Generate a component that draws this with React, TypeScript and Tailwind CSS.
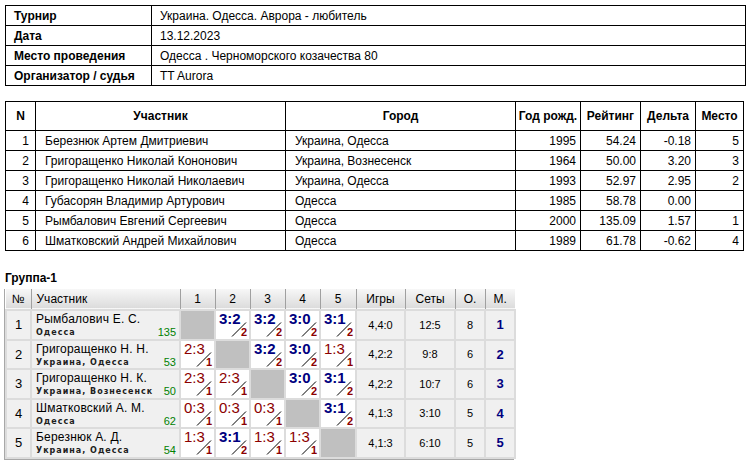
import React from "react";

const info = [
  ["Турнир", "Украина. Одесса. Аврора - любитель"],
  ["Дата", "13.12.2023"],
  ["Место проведения", "Одесса . Черноморского козачества 80"],
  ["Организатор / судья", "TT Aurora"],
];

const players = [
  ["1", "Березнюк Артем Дмитриевич", "Украина, Одесса", "1995", "54.24", "-0.18", "5"],
  ["2", "Григоращенко Николай Кононович", "Украина, Вознесенск", "1964", "50.00", "3.20", "3"],
  ["3", "Григоращенко Николай Николаевич", "Украина, Одесса", "1993", "52.97", "2.95", "2"],
  ["4", "Губасорян Владимир Артурович", "Одесса", "1985", "58.78", "0.00", ""],
  ["5", "Рымбалович Евгений Сергеевич", "Одесса", "2000", "135.09", "1.57", "1"],
  ["6", "Шматковский Андрей Михайлович", "Одесса", "1989", "61.78", "-0.62", "4"],
];

type Row = {
  n: string;
  name: string;
  city: string;
  rating: string;
  scores: (string | null)[];
  games: string;
  sets: string;
  pts: string;
  place: string;
};

const group: Row[] = [
  { n: "1", name: "Рымбалович Е. С.", city: "Одесса", rating: "135", scores: [null, "3:2", "3:2", "3:0", "3:1"], games: "4,4:0", sets: "12:5", pts: "8", place: "1" },
  { n: "2", name: "Григоращенко Н. Н.", city: "Украина, Одесса", rating: "53", scores: ["2:3", null, "3:2", "3:0", "1:3"], games: "4,2:2", sets: "9:8", pts: "6", place: "2" },
  { n: "3", name: "Григоращенко Н. К.", city: "Украина, Вознесенск", rating: "50", scores: ["2:3", "2:3", null, "3:0", "3:1"], games: "4,2:2", sets: "10:7", pts: "6", place: "3" },
  { n: "4", name: "Шматковский А. М.", city: "Одесса", rating: "62", scores: ["0:3", "0:3", "0:3", null, "3:1"], games: "4,1:3", sets: "3:10", pts: "5", place: "4" },
  { n: "5", name: "Березнюк А. Д.", city: "Украина, Одесса", rating: "54", scores: ["1:3", "3:1", "1:3", "1:3", null], games: "4,1:3", sets: "6:10", pts: "5", place: "5" },
];

function ScoreCell({ s }: { s: string | null }) {
  if (s === null) {
    return <td className="bg-[#c0c0c0] border-2 border-[#dcdcdc] p-0" />;
  }
  const [a, b] = s.split(":").map(Number);
  const win = a > b;
  return (
    <td className="bg-white border-2 border-[#dcdcdc] p-0 align-top">
      <div className="relative h-[27px]">
        <span
          className={
            win
              ? "absolute left-[3px] top-[0px] text-[15px] leading-[16px] font-bold text-[#000080]"
              : "absolute left-[3px] top-[0px] text-[15px] leading-[16px] text-[#8b0000]"
          }
        >
          {s}
        </span>
        <svg className="absolute left-0 top-0" width="34" height="27" viewBox="0 0 34 27">
          <line x1="16" y1="25.5" x2="30" y2="11.5" stroke="#000" strokeWidth="1" />
        </svg>
        <span className="absolute right-[2px] bottom-[0px] text-[11px] leading-[11px] font-bold text-[#8b0000]">
          {win ? "2" : "1"}
        </span>
      </div>
    </td>
  );
}

export default function App() {
  return (
    <div className="w-[750px] h-[464px] bg-white text-black overflow-hidden" style={{ fontFamily: '"Liberation Sans", Arial, sans-serif' }}>
      <div className="pt-[5px] pl-[5px]">
        <table className="border-collapse w-[741px] text-[12px]">
          <tbody>
            {info.map(([k, v]) => (
              <tr key={k} className="h-[20px]">
                <td className="border border-black w-[146px] pl-[8px] font-bold leading-[14px] py-0">{k}</td>
                <td className="border border-black pl-[8px] leading-[14px] py-0">{v}</td>
              </tr>
            ))}
          </tbody>
        </table>

        <table className="border-collapse w-[739px] text-[12px] mt-[15px]">
          <thead>
            <tr className="h-[29px] font-bold">
              <th className="border border-black w-[30px] text-center">N</th>
              <th className="border border-black w-[250px] text-center">Участник</th>
              <th className="border border-black w-[230px] text-center">Город</th>
              <th className="border border-black w-[65px] text-center">Год рожд.</th>
              <th className="border border-black w-[60px] text-center">Рейтинг</th>
              <th className="border border-black w-[55px] text-center">Дельта</th>
              <th className="border border-black text-center">Место</th>
            </tr>
          </thead>
          <tbody>
            {players.map((p) => (
              <tr key={p[0]} className="h-[20px] leading-[14px]">
                <td className="border border-black text-right pr-[6px] py-0">{p[0]}</td>
                <td className="border border-black pl-[9px] py-0">{p[1]}</td>
                <td className="border border-black pl-[9px] py-0">{p[2]}</td>
                <td className="border border-black text-right pr-[4px] py-0">{p[3]}</td>
                <td className="border border-black text-right pr-[4px] py-0">{p[4]}</td>
                <td className="border border-black text-right pr-[4px] py-0">{p[5]}</td>
                <td className="border border-black text-right pr-[4px] py-0">{p[6]}</td>
              </tr>
            ))}
          </tbody>
        </table>
      </div>

      <div className="pl-[5px] mt-[20px] text-[12px] font-bold leading-[14px]">Группа-1</div>

      <div className="ml-[4px] mt-[4px] w-[510px] border-x border-b border-[#a8a8a8]">
        <table className="border-collapse w-full text-[12px] table-fixed">
          <colgroup>
            <col className="w-[25px]" />
            <col className="w-[149px]" />
            <col className="w-[35px]" />
            <col className="w-[35px]" />
            <col className="w-[35px]" />
            <col className="w-[35px]" />
            <col className="w-[36px]" />
            <col className="w-[49px]" />
            <col className="w-[50px]" />
            <col className="w-[30px]" />
            <col className="w-[30px]" />
          </colgroup>
          <thead>
            <tr className="h-[21px] bg-gradient-to-b from-[#f7f7f7] to-[#dcdcdc] border-b-2 border-[#a0a0a0]">
              <th className="font-normal text-center border-r border-[#a0a0a0] p-0">№</th>
              <th className="font-normal text-left pl-[5px] border-r border-[#a0a0a0] p-0">Участник</th>
              {["1", "2", "3", "4", "5"].map((h) => (
                <th key={h} className="font-normal text-center border-r border-[#a0a0a0] p-0">{h}</th>
              ))}
              <th className="font-normal text-center border-r border-[#a0a0a0] p-0">Игры</th>
              <th className="font-normal text-center border-r border-[#a0a0a0] p-0">Сеты</th>
              <th className="font-normal text-center border-r border-[#a0a0a0] p-0">О.</th>
              <th className="font-normal text-center p-0">М.</th>
            </tr>
          </thead>
          <tbody>
            {group.map((r) => (
              <tr key={r.n} className="h-[29.5px] bg-[#f0f0f0]">
                <td className="border-2 border-[#dcdcdc] text-center p-0 text-[13px]">{r.n}</td>
                <td className="border-2 border-[#dcdcdc] p-0">
                  <div className="pl-[4px] pr-[3px] leading-[15px] text-[12px] tracking-[0.2px] pt-[1px] whitespace-nowrap">{r.name}</div>
                  <div className="pl-[4px] pr-[3px] flex justify-between items-end leading-[11px] whitespace-nowrap">
                    <span className="text-[8px] font-bold tracking-[1px] text-[#202020]" style={{ fontFamily: '"DejaVu Sans", Verdana, sans-serif' }}>{r.city}</span>
                    <span className="text-[11px] text-[#008000]">{r.rating}</span>
                  </div>
                </td>
                {r.scores.map((s, i) => (
                  <ScoreCell key={i} s={s} />
                ))}
                <td className="border-2 border-[#dcdcdc] text-center p-0 text-[11px]">{r.games}</td>
                <td className="border-2 border-[#dcdcdc] text-center p-0 text-[11px]">{r.sets}</td>
                <td className="border-2 border-[#dcdcdc] text-center p-0 text-[11px]">{r.pts}</td>
                <td className="border-2 border-[#dcdcdc] text-center p-0 font-bold text-[13px] text-[#000080]">{r.place}</td>
              </tr>
            ))}
          </tbody>
        </table>
      </div>
    </div>
  );
}
